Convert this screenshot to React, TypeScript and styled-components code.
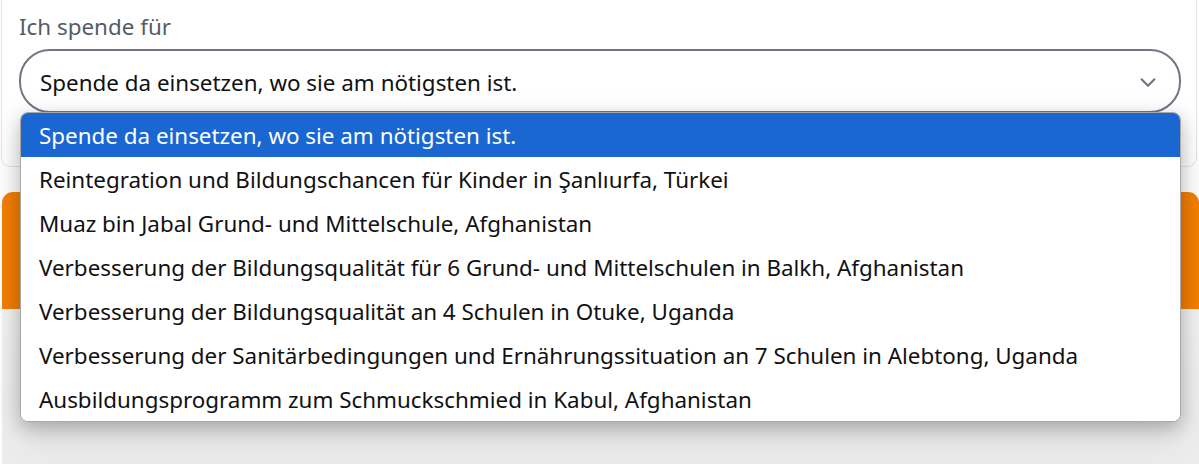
import React from "react";
import styled, { createGlobalStyle } from "styled-components";

const Global = createGlobalStyle`
  html, body { margin: 0; padding: 0; background: #ffffff; }
  body { font-family: "Noto Sans", "Open Sans", sans-serif; overflow: hidden; }
  #root { width: 1199px; height: 464px; }
`;

const Page = styled.div`
  position: relative;
  width: 1199px;
  height: 464px;
  display: flex;
  flex-direction: column;
  background: #ffffff;
`;

const Card = styled.div`
  margin: 0 2px 0 1px;
  border: 1px solid #e3e5e8;
  border-top: none;
  border-radius: 0 0 9px 9px;
  padding: 14px 15px 53px 17px;
  display: flex;
  flex-direction: column;
  gap: 9px;
  background: #fff;
`;

const Label = styled.div`
  font-size: 22.4px;
  line-height: 26px;
  color: #555b64;
`;

const SelectBox = styled.div`
  position: relative;
  height: 58px;
  border: 2px solid #6f7683;
  border-radius: 31px;
  display: flex;
  align-items: center;
  justify-content: space-between;
  padding: 2px 20px 0 19px;
  font-size: 22.4px;
  color: #111;
  background: #fff;
`;

const Orange = styled.div`
  margin: 25px 0 0 2px;
  height: 117px;
  background: #f57f00;
  border-radius: 11px 11px 0 0;
`;

const Grey = styled.div`
  flex: 1;
  margin-left: 2px;
  background: linear-gradient(180deg, #f3f3f3 0%, #ececec 100%);
`;

const List = styled.ul`
  position: absolute;
  left: 20px;
  top: 112px;
  width: 1159px;
  margin: 0;
  padding: 0;
  list-style: none;
  background: #fff;
  border: 1px solid #a9a9a9;
  border-radius: 8px;
  overflow: hidden;
  box-shadow: 0 6px 18px rgba(0, 0, 0, 0.24), 0 14px 40px rgba(0, 0, 0, 0.1);
`;

const Item = styled.li<{ $active?: boolean }>`
  height: 44px;
  display: flex;
  align-items: center;
  padding-left: 18px;
  font-size: 22.4px;
  color: ${(p) => (p.$active ? "#ffffff" : "#111111")};
  background: ${(p) => (p.$active ? "#1a67d2" : "#ffffff")};
  white-space: nowrap;
`;

const Chevron = () => (
  <svg width="22" height="22" viewBox="0 0 24 24" fill="none" stroke="#6b7280" strokeWidth="2.2" strokeLinecap="round" strokeLinejoin="round">
    <path d="M5 9l7 7 7-7" />
  </svg>
);

const options = [
  "Spende da einsetzen, wo sie am nötigsten ist.",
  "Reintegration und Bildungschancen für Kinder in Şanlıurfa, Türkei",
  "Muaz bin Jabal Grund- und Mittelschule, Afghanistan",
  "Verbesserung der Bildungsqualität für 6 Grund- und Mittelschulen in Balkh, Afghanistan",
  "Verbesserung der Bildungsqualität an 4 Schulen in Otuke, Uganda",
  "Verbesserung der Sanitärbedingungen und Ernährungssituation an 7 Schulen in Alebtong, Uganda",
  "Ausbildungsprogramm zum Schmuckschmied in Kabul, Afghanistan",
];

export default function App() {
  return (
    <Page>
      <Global />
      <Card>
        <Label>Ich spende für</Label>
        <SelectBox>
          <span>{options[0]}</span>
          <Chevron />
        </SelectBox>
      </Card>
      <Orange />
      <Grey />
      <List>
        {options.map((o, i) => (
          <Item key={i} $active={i === 0}>
            {o}
          </Item>
        ))}
      </List>
    </Page>
  );
}
